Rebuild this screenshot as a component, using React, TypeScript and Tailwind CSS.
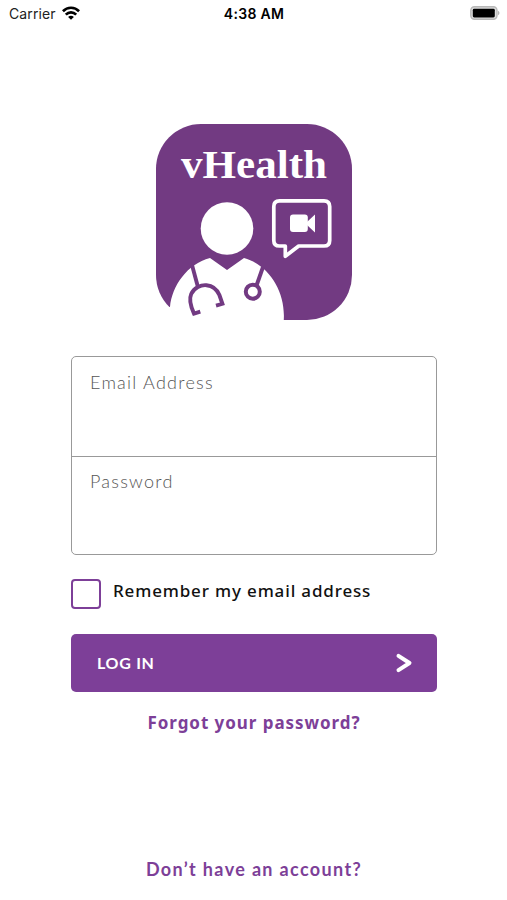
import React, { useState } from 'react'

function StatusBar() {
    return (
        <header className="grid h-[27px] grid-cols-3 items-center pr-[7px] pl-[9px] font-['Inter','Liberation_Sans',sans-serif] text-[14px] text-[#222]">
            <div className="flex items-center gap-[6px]">
                <span className="tracking-[0.1px]">Carrier</span>
                <svg className="-mt-[2px]" width="18" height="14" viewBox="0 0 18 14" fill="none" stroke="#000" strokeWidth="2.7">
                    <path d="M0.9 5.2C5.4 0.6 12.6 0.6 17.1 5.2" />
                    <path d="M3.8 8.6C6.8 5.6 11.2 5.6 14.2 8.6" />
                    <path d="M9 13.8L6.1 10.9C7.8 9.5 10.2 9.5 11.9 10.9Z" fill="#000" stroke="none" />
                </svg>
            </div>
            <span className="-ml-[1px] text-center font-semibold tracking-[0.3px] whitespace-nowrap text-black">4:38 AM</span>
            <svg className="-mt-[1px] justify-self-end" width="30" height="14" viewBox="0 0 30 14">
                <rect x="0.8" y="0.8" width="26.2" height="12.4" rx="3.6" fill="#ddd" stroke="#b8b8b8" strokeWidth="1.4" />
                <rect x="2.8" y="2.8" width="22" height="8.6" rx="1.4" fill="#000" />
                <path d="M28 4.8C30 5.6 30 8.4 28 9.2Z" fill="#b5b5b5" />
            </svg>
        </header>
    )
}

function Logo() {
    return (
        <svg width="196" height="196" viewBox="0 0 196 196" fill="none">
            <rect width="196" height="196" rx="45" fill="#723a82" />
            <text
                x="25"
                y="53.5"
                textLength="146"
                lengthAdjust="spacingAndGlyphs"
                className="font-['Liberation_Serif',serif] text-[40px] font-bold"
                fill="#fff"
            >
                vHealth
            </text>

            {/* Doctor */}
            <circle cx="71" cy="104.5" r="26.3" fill="#fff" />
            <path d="M0 197V183H14C16 162 31 140 54 134L71 146L88 134C113 141 130 168 127.7 197Z" fill="#fff" />

            {/* Stethoscope */}
            <g stroke="#723a82" strokeWidth="3.9">
                <path d="M36 141L41.8 162.5" />
                <path d="M44.3 187.6L38 189.6C34.5 182 32.7 175.5 35.2 170C38.2 163.5 45 160.7 50.5 161.2C56.5 161.7 61 165.5 63.4 171L66.4 179.8L60 181.6" />
                <path d="M107 143L100.5 161.5" />
                <circle cx="96.8" cy="167.7" r="7" strokeWidth="4" />
            </g>

            {/* Video call bubble */}
            <path
                d="M123.5 76.8H168Q173.7 76.8 173.7 82.5V116.5Q173.7 122 168 122H142.7L129.3 132.3V122H123.5Q117.8 122 117.8 116.5V82.5Q117.8 76.8 123.5 76.8Z"
                stroke="#fff"
                strokeWidth="3.7"
                strokeLinejoin="round"
            />
            <rect x="134" y="90.5" width="17.8" height="17.6" rx="3" fill="#fff" />
            <path d="M151 98L159 90.5V108.5L151 101Z" fill="#fff" />
        </svg>
    )
}

export default function App() {
    const [remember, setRemember] = useState(false)

    return (
        <div className="flex h-[900px] w-[507px] flex-col items-center bg-white font-['Lato','Noto_Sans',sans-serif] text-[18px]">
            <div className="w-full">
                <StatusBar />
            </div>

            <main className="mt-[97px] ml-[1px] flex w-[366px] flex-1 flex-col items-center">
                <Logo />

                <div className="mt-[36px] h-[199px] w-full rounded-[5px] border border-[#999] font-light text-[#555]">
                    <label className="flex h-[100px] items-start border-b border-[#999] px-[18px] pt-[12px]">
                        <span className="tracking-[1.25px]">Email Address</span>
                    </label>
                    <label className="flex h-[97px] items-start px-[18px] pt-[11px]">
                        <span className="tracking-[1.25px]">Password</span>
                    </label>
                </div>

                <button
                    className="mt-[24px] flex h-[30px] w-full items-center gap-[12px] text-left"
                    onClick={() => setRemember(!remember)}
                >
                    <span className="flex size-[30px] items-center justify-center rounded-[4px] border-2 border-[#7d3f98]">
                        {remember && <span className="size-4 rounded-xs bg-[#7d3f98]" />}
                    </span>
                    <span className="-mt-[7px] font-['Noto_Sans',sans-serif] text-[17px] font-medium tracking-[0.85px] text-[#111]">
                        Remember my email address
                    </span>
                </button>

                <button className="mt-[25px] flex h-[58px] w-full items-center justify-between rounded-[5px] bg-[#7d3f98] pr-[24px] pl-[26px] text-white">
                    <span className="text-[16px] font-bold tracking-[0.7px]">LOG IN</span>
                    <svg width="18" height="22" viewBox="0 0 18 22" fill="none" stroke="#fff" strokeWidth="4" strokeLinecap="round">
                        <path d="M3.5 3.8L14.5 11L3.5 18.2" strokeLinejoin="round" />
                    </svg>
                </button>

                <a className="mt-[18px] font-['Noto_Sans',sans-serif] text-[17px] leading-[26px] font-bold tracking-[0.95px] text-[#7d3f98]">
                    Forgot your password?
                </a>
                <a className="mt-auto mb-[18px] text-[18px] leading-[26px] font-bold tracking-[1.35px] text-[#7d3f98]">
                    Don’t have an account?
                </a>
            </main>
        </div>
    )
}
